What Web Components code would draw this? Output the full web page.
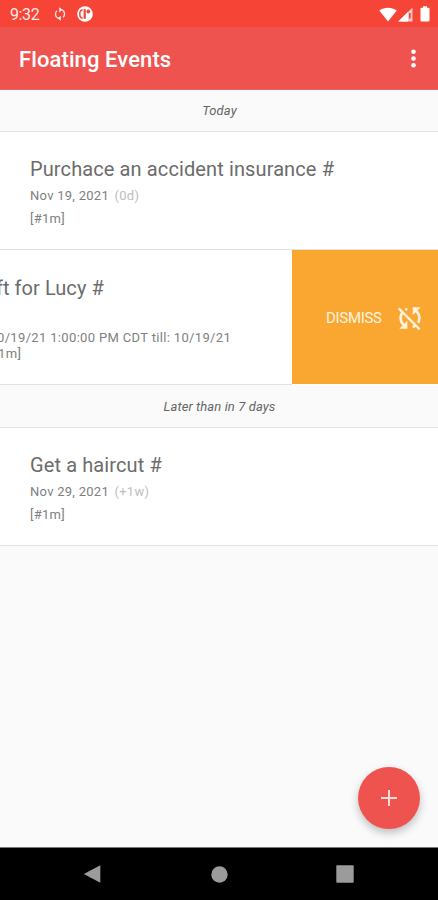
<!DOCTYPE html>
<html lang="en">
<head>
<meta charset="utf-8">
<title>Floating Events</title>
<style>
    html, body {
        margin: 0;
        height: 100%;
        overflow: hidden;
    }
    body {
        font-family: Roboto, "Liberation Sans", sans-serif;
        background: #fafafa;
    }
</style>
</head>
<body>
<events-app></events-app>
<script>
const define = (name, html) => {
    window.customElements.define(name,
        class extends HTMLElement {
            constructor() {
                super()
                this.attachShadow({ mode: "open" })
                this.shadowRoot.innerHTML = html
            }
        }
    )
}

define('status-bar', `
    <style>
        :host{
            display:flex;
            align-items:center;
            box-sizing:border-box;
            height:27px;
            padding:1px 8px 0 10px;
            background:#f64436;
            color:#ffe9e6;
            font-size:16px;
        }
        .time{
            width:44px;
            letter-spacing:-0.4px;
        }
        svg{
            display:block;
            fill:#fff;
        }
        .sync{ margin-right:11px; }
        .wifi{ margin-left:auto; }
        .signal{ margin-left:1px; }
        .battery{ margin-left:7px; }
    </style>
    <span class="time">9:32</span>
    <svg class="sync" width="12" height="14" viewBox="0 0 12 14">
        <g fill="none" stroke="#ffe3e0" stroke-width="1.4">
            <path d="M4 11.2A4.5 4.5 0 0 1 3 3.7"/>
            <path d="M8 2.8A4.5 4.5 0 0 1 9 10.3"/>
        </g>
        <path d="M5.3 .3v5L8.4 2.8zM6.7 13.7v-5L3.6 11.2z"/>
    </svg>
    <svg width="16" height="16" viewBox="0 0 16 16">
        <circle cx="8" cy="8" r="7.8"/>
        <path fill="none" stroke="#f64436" stroke-width="1.5" d="M5.600 3.800C3.400 4.200 2.800 6 2.800 8s.6 3.800 2.800 4.200"/>
        <path fill="#f64436" d="M6.600 3.200h2.200v9.600H6.600z"/>
        <circle cx="11.300" cy="5.500" r="1.900" fill="#f64436"/>
    </svg>
    <svg class="wifi" width="18" height="15" viewBox="0 0 18 15">
        <path d="M.3 3.500C5.200-.2 12.800-.2 17.700 3.500L9 14.500z"/>
    </svg>
    <svg class="signal" width="15" height="15" viewBox="0 0 15 15">
        <path fill-opacity=".7" d="M14.500.5v14H.2z"/>
        <path d="M10 5v9.500H.2z"/>
        <path fill="#f64436" d="M11 6h1.600v5.500H11z"/>
    </svg>
    <svg class="battery" width="10" height="16" viewBox="0 0 10 16">
        <path d="M3 .3h4v1.500h1.500q1 0 1 1v11.700q0 1-1 1h-7q-1 0-1-1V2.800q0-1 1-1H3z"/>
    </svg>
`)

define('app-bar', `
    <style>
        :host{
            display:flex;
            align-items:center;
            justify-content:space-between;
            box-sizing:border-box;
            height:63px;
            padding:3px 22px 0 19px;
            background:#ef5350;
            color:#fff;
            border-bottom:1px solid #eb6a66;
        }
        h1{
            margin:0;
            font-size:22px;
            font-weight:500;
            letter-spacing:0.1px;
        }
        svg{
            display:block;
            margin-top:-3px;
            fill:#fff;
        }
    </style>
    <h1><slot></slot></h1>
    <svg width="5" height="19" viewBox="0 0 5 19">
        <circle cx="2.500" cy="2.700" r="2.300"/>
        <circle cx="2.500" cy="9.500" r="2.300"/>
        <circle cx="2.500" cy="16.200" r="2.300"/>
    </svg>
`)

define('section-header', `
    <style>
        :host{
            display:block;
            box-sizing:border-box;
            height:var(--header-height, 42px);
            padding-left:1px;
            border-bottom:1px solid #e2e2e2;
            background:#fafafa;
            color:#666;
            font-size:13px;
            font-style:italic;
            line-height:var(--header-height, 42px);
            letter-spacing:0.1px;
            text-align:center;
        }
    </style>
    <slot></slot>
`)

define('event-item', `
    <style>
        :host{
            display:block;
            box-sizing:border-box;
            height:118px;
            padding:25px 30px 0;
            border-bottom:1px solid #e2e2e2;
            background:#fff;
            color:#808080;
            font-size:13px;
            letter-spacing:0.27px;
            white-space:nowrap;
        }
        .title{
            height:26px;
            color:#6c6c6c;
            font-size:20px;
            line-height:25px;
            letter-spacing:0.11px;
        }
        .line{
            height:22.500px;
            line-height:26px;
        }
        ::slotted([slot=left]){
            margin-left:2px;
            color:#bdbdbd;
        }
    </style>
    <div class="title"><slot name="title"></slot></div>
    <div class="line"><slot name="date"></slot> <slot name="left"></slot></div>
    <div class="line"><slot name="tags"></slot></div>
`)

// the row is dragged to the left, its action shows on the right
define('swiped-item', `
    <style>
        :host{
            display:flex;
            box-sizing:border-box;
            height:135px;
            overflow:hidden;
            background:#fff;
            color:#808080;
            white-space:nowrap;
        }
        .content{
            display:flex;
            flex-direction:column;
            align-items:flex-start;
            box-sizing:border-box;
            width:292px;
            padding-top:26px;
            overflow:hidden;
            border-bottom:1px solid #e2e2e2;
            font-size:13px;
            line-height:16px;
            letter-spacing:0.34px;
        }
        .title{
            height:54px;
            margin-left:-4px;
            color:#6c6c6c;
            font-size:20px;
            line-height:25px;
            letter-spacing:0.05px;
        }
        .when{ margin-left:-3px; }
        .tags{ margin-left:-2px; }
        .action{
            flex:1;
            display:flex;
            align-items:center;
            box-sizing:border-box;
            height:134px;
            padding:2px 0 0 34px;
            background:#faa732;
            color:#fff3e0;
            font-size:15px;
            letter-spacing:-0.3px;
        }
        svg{
            display:block;
            margin-left:12px;
        }
    </style>
    <div class="content">
        <div class="title"><slot name="title"></slot></div>
        <div class="when"><slot name="when"></slot></div>
        <div class="tags"><slot name="tags"></slot></div>
    </div>
    <div class="action">
        <slot name="action"></slot>
        <svg width="32" height="32" viewBox="0 0 24 24" fill="#fff3e0">
            <path d="M10 6.350V4.260c-.8.210-1.550.540-2.230.960l1.460 1.460c.25-.12.500-.24.770-.33zm-7.140-.94l2.360 2.360C4.450 8.990 4 10.440 4 12c0 2.210.910 4.200 2.360 5.640L4 20h6v-6l-2.240 2.240C6.680 15.150 6 13.660 6 12c0-1 .25-1.940.68-2.770l8.080 8.080c-.25.130-.5.250-.77.340v2.090c.8-.21 1.550-.54 2.230-.96l2.360 2.360 1.270-1.270L4.140 4.140 2.860 5.410zM20 4h-6v6l2.240-2.240C17.320 8.850 18 10.340 18 12c0 1-.25 1.940-.68 2.770l1.460 1.460C19.550 15.010 20 13.560 20 12c0-2.210-.91-4.200-2.360-5.640L20 4z"/>
        </svg>
    </div>
`)

define('add-button', `
    <style>
        :host{
            display:grid;
            place-items:center;
            width:62px;
            height:62px;
            border-radius:50%;
            background:#ef5350;
            box-shadow:0 4px 8px rgba(0,0,0,.24);
        }
    </style>
    <svg width="16" height="16" viewBox="0 0 16 16" stroke="#ffd9d6" stroke-width="2">
        <path d="M8 0v16M0 8h16"/>
    </svg>
`)

define('nav-bar', `
    <style>
        :host{
            display:flex;
            align-items:center;
            justify-content:space-between;
            box-sizing:border-box;
            height:53px;
            padding:0 84px 0 83px;
            border-top:1px solid #777;
            background:#000;
        }
        svg{
            display:block;
            fill:#9b9b9b;
        }
    </style>
    <svg width="18" height="18" viewBox="0 0 18 18"><path d="M17.300.3v17.400L.8 9z"/></svg>
    <svg width="18" height="17" viewBox="0 0 18 17"><circle cx="9.500" cy="8.500" r="8.200"/></svg>
    <svg width="18" height="18" viewBox="0 0 18 18"><rect x=".3" y=".3" width="17.400" height="17.400" rx="1"/></svg>
`)

define('events-app', `
    <style>
        :host{
            position:relative;
            display:flex;
            flex-direction:column;
            width:438px;
            height:900px;
            overflow:hidden;
            background:#fafafa;
        }
        main{ flex:1; }
        .later{ --header-height:43px; }
        add-button{
            position:absolute;
            right:18px;
            bottom:71px;
        }
    </style>
    <status-bar></status-bar>
    <app-bar>Floating Events</app-bar>
    <main>
        <section-header>Today</section-header>
        <event-item>
            <span slot="title">Purchace an accident insurance #</span>
            <span slot="date">Nov 19, 2021</span>
            <span slot="left">(0d)</span>
            <span slot="tags">[#1m]</span>
        </event-item>
        <swiped-item>
            <span slot="title">ft for Lucy #</span>
            <span slot="when">0/19/21 1:00:00 PM CDT till: 10/19/21</span>
            <span slot="tags">1m]</span>
            <span slot="action">DISMISS</span>
        </swiped-item>
        <section-header class="later">Later than in 7 days</section-header>
        <event-item>
            <span slot="title">Get a haircut #</span>
            <span slot="date">Nov 29, 2021</span>
            <span slot="left">(+1w)</span>
            <span slot="tags">[#1m]</span>
        </event-item>
    </main>
    <add-button></add-button>
    <nav-bar></nav-bar>
`)
</script>
</body>
</html>
